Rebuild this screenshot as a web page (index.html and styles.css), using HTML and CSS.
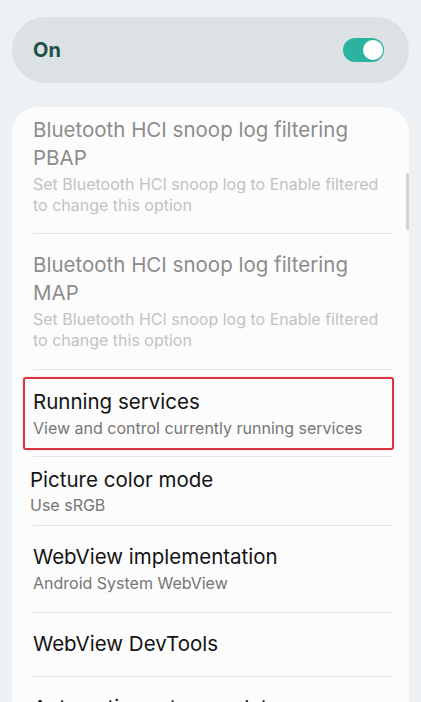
FILE: index.html
```html
<!DOCTYPE html>
<html lang="en">
<head>
<meta charset="utf-8">
<title>Developer options</title>
<link rel="stylesheet" href="styles.css">
</head>
<body>
<div class="screen">
  <div class="master">
    <span class="master-label">On</span>
    <span class="switch"><span class="knob"></span></span>
  </div>
  <div class="card">
    <div class="scrollbar"></div>
    <div class="item item-first disabled">
      <div class="title">Bluetooth HCI snoop log filtering PBAP</div>
      <div class="summary">Set Bluetooth HCI snoop log to Enable filtered to change this option</div>
    </div>
    <div class="item disabled">
      <div class="title">Bluetooth HCI snoop log filtering MAP</div>
      <div class="summary">Set Bluetooth HCI snoop log to Enable filtered to change this option</div>
    </div>
    <div class="item item-highlight">
      <div class="highlight">
        <div class="title">Running services</div>
        <div class="summary">View and control currently running services</div>
      </div>
    </div>
    <div class="item item-compact">
      <div class="title">Picture color mode</div>
      <div class="summary">Use sRGB</div>
    </div>
    <div class="item">
      <div class="title">WebView implementation</div>
      <div class="summary">Android System WebView</div>
    </div>
    <div class="item">
      <div class="title">WebView DevTools</div>
    </div>
    <div class="item item-last">
      <div class="title">Automatic system updates</div>
    </div>
  </div>
</div>
</body>
</html>
```

FILE: styles.css
```css
* { box-sizing: border-box; }
html, body { margin: 0; padding: 0; }
body {
  background: #eef1f3;
  font-family: Inter, Roboto, "Liberation Sans", sans-serif;
  width: 421px;
  height: 702px;
  overflow: hidden;
}
.screen {
  display: flex;
  flex-direction: column;
  padding: 17px 12px 0 12px;
  gap: 24px;
  height: 702px;
}
.master {
  height: 66px;
  border-radius: 33px;
  background: #dce2e4;
  display: flex;
  align-items: center;
  justify-content: space-between;
  padding: 0 25px 0 21px;
}
.master-label {
  font-size: 20px;
  font-weight: 700;
  color: #1d5246;
}
.switch {
  width: 41px;
  height: 24px;
  border-radius: 12px;
  background: #2bb39f;
  position: relative;
}
.knob {
  position: absolute;
  right: 1px;
  top: 2px;
  width: 20px;
  height: 20px;
  border-radius: 50%;
  background: #ffffff;
}
.card {
  position: relative;
  flex: 1;
  background: #fcfcfc;
  border-radius: 26px 26px 0 0;
  padding: 0 17px 0 21px;
  overflow: hidden;
}
.scrollbar {
  position: absolute;
  right: 0;
  top: 66px;
  width: 3px;
  height: 57px;
  border-radius: 2px;
  background: #d4d4d4;
}
.item {
  padding: 17px 0 18px 0;
  border-bottom: 1px solid #e4e4e4;
}
.item-first { padding: 9px 0 17px 0; }
.item-highlight { padding: 7px 0 6px 0; }
.highlight {
  margin: 0 -2px 0 -10px;
  padding: 9px 2px 9px 8px;
  border: 2px solid #d8333f;
  border-radius: 3px;
  box-shadow: 0 0 2px rgba(216, 51, 63, 0.35);
}
.item-compact { padding: 9px 0 9px 0; }
.item-compact .title, .item-compact .summary { margin-left: -3px; }
.item-compact .summary { margin-top: 1px; }
.item-last { border-bottom: none; padding-top: 17px; }
.title {
  font-size: 20.5px;
  line-height: 28px;
  color: #141414;
}
.summary {
  font-size: 16px;
  line-height: 21px;
  color: #767676;
  margin-top: 2px;
}
.disabled .title { color: #8c8c8c; }
.disabled .summary { color: #c2c2c2; }
```
